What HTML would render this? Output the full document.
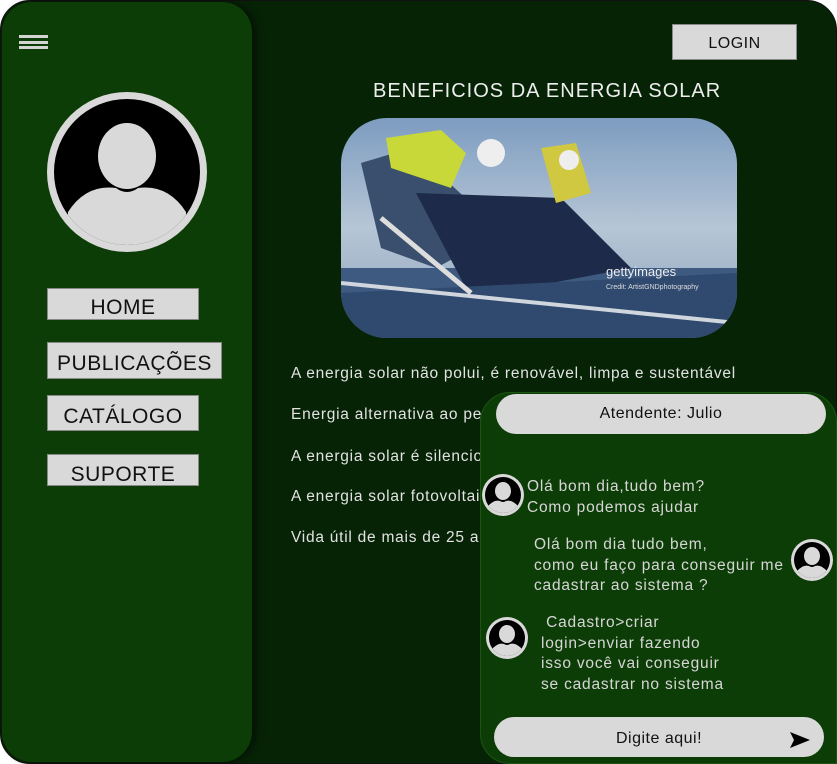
<!DOCTYPE html>
<html><head><meta charset="utf-8"><style>
*{margin:0;padding:0;box-sizing:border-box}
body{width:837px;height:764px;background:#fff;position:relative;overflow:hidden;font-family:"Liberation Sans","DejaVu Sans",sans-serif}
.main{position:absolute;left:0;top:0;width:837px;height:764px;background:#062306;border-radius:30px;border:1px solid #111}
.side{position:absolute;left:2px;top:2px;width:250px;height:760px;background:#0d3d06;border-radius:30px 30px 30px 30px;box-shadow:4px 0 8px rgba(0,0,0,.5)}
.btn{position:absolute;background:#d9d9d9;border:1px solid #888;color:#111;font-size:21px;text-align:center;letter-spacing:.5px}
.t{position:absolute;color:#e2e2e2;font-size:15.5px;white-space:nowrap;letter-spacing:.75px}
.chat{position:absolute;left:480px;top:392px;width:357px;height:372px;background:#0d3d06;border-radius:30px 30px 0 30px;border:1px solid #1b5512}
.pill{position:absolute;background:#d9d9d9;color:#111;text-align:center;font-size:16px;letter-spacing:.5px}
.msg{position:absolute;color:#d6d6d6;font-size:15.5px;line-height:20.5px;white-space:nowrap;letter-spacing:.8px}
</style></head><body>
<div class="main"></div>
<div class="side"></div>
<div style="position:absolute;left:19px;top:35px;width:29px;height:3px;background:#d4d4d4"></div>
<div style="position:absolute;left:19px;top:41px;width:29px;height:3px;background:#d4d4d4"></div>
<div style="position:absolute;left:19px;top:46px;width:29px;height:3px;background:#d4d4d4"></div>
<svg style="position:absolute;left:46px;top:92px" width="162" height="160" viewBox="0 0 162 160">
<defs><clipPath id="c"><circle cx="81" cy="80" r="73"/></clipPath></defs>
<circle cx="81" cy="80" r="80" fill="#d9d9d9"/>
<circle cx="81" cy="80" r="73" fill="#000"/>
<g clip-path="url(#c)"><ellipse cx="81" cy="64" rx="29" ry="33" fill="#d9d9d9"/>
<path d="M22 170 L22 120 Q40 92 70 96 Q81 104 92 96 Q122 92 140 120 L140 170Z" fill="#d9d9d9"/></g>
</svg>
<div class="btn" style="left:47px;top:288px;width:152px;height:32px;line-height:38px">HOME</div>
<div class="btn" style="left:47px;top:342px;width:175px;height:37px;line-height:42px">PUBLICAÇÕES</div>
<div class="btn" style="left:47px;top:395px;width:152px;height:36px;line-height:41px">CATÁLOGO</div>
<div class="btn" style="left:47px;top:454px;width:152px;height:32px;line-height:40px">SUPORTE</div>
<div class="btn" style="left:672px;top:24px;width:125px;height:36px;line-height:37px;font-size:16px">LOGIN</div>
<div class="t" style="left:373px;top:80px;font-size:20px;color:#eee;letter-spacing:1px">BENEFICIOS DA ENERGIA SOLAR</div>
<svg style="position:absolute;left:341px;top:118px" width="396" height="220" viewBox="0 0 396 220">
<defs><clipPath id="r"><rect width="396" height="220" rx="46"/></clipPath>
<linearGradient id="sky" x1="0" y1="0" x2="0" y2="1"><stop offset="0" stop-color="#7d9cc0"/><stop offset=".5" stop-color="#b6c6d6"/><stop offset="1" stop-color="#8aa0b8"/></linearGradient></defs>
<g clip-path="url(#r)">
<rect width="396" height="220" fill="url(#sky)"/>
<rect y="150" width="396" height="70" fill="#3e5a80"/>
<polygon points="20,45 70,30 130,85 150,120 95,150 40,130" fill="#3a4e6e"/>
<polygon points="75,75 220,80 290,150 130,180" fill="#1d2a4a"/>
<polygon points="0,175 396,155 396,220 0,220" fill="#30496e"/>
<line x1="40" y1="100" x2="130" y2="175" stroke="#ddd" stroke-width="5"/>
<line x1="0" y1="165" x2="396" y2="205" stroke="#cfd6de" stroke-width="4"/>
<polygon points="45,20 100,12 125,35 110,70 50,50" fill="#c8d838"/>
<circle cx="150" cy="35" r="14" fill="#eee"/>
<polygon points="200,30 235,25 250,75 215,85" fill="#d0c840"/>
<circle cx="228" cy="42" r="10" fill="#eee"/>
<text x="265" y="158" fill="#eee" font-size="13" font-family="Liberation Sans">gettyimages</text>
<text x="265" y="171" fill="#ddd" font-size="7" font-family="Liberation Sans">Credit: ArtistGNDphotography</text>
</g></svg>
<div class="t" style="left:291px;top:365px">A energia solar não polui, é renovável, limpa e sustentável</div>
<div class="t" style="left:291px;top:406px">Energia alternativa ao petróleo</div>
<div class="t" style="left:291px;top:447px">A energia solar é silencio<span style="color:#8a4fe0">❖ ...</span></div>
<div class="t" style="left:291px;top:488px">A energia solar fotovoltaica</div>
<div class="t" style="left:291px;top:529px">Vida útil de mais de 25 anos</div>
<div class="chat"></div>
<div class="pill" style="left:496px;top:394px;width:330px;height:40px;line-height:40px;border-radius:20px">Atendente: Julio</div>
<svg width="0" height="0" style="position:absolute"><defs><symbol id="av" viewBox="0 0 42 42"><clipPath id="ac"><circle cx="21" cy="21" r="18"/></clipPath><circle cx="21" cy="21" r="21" fill="#d9d9d9"/><circle cx="21" cy="21" r="18" fill="#000"/><g clip-path="url(#ac)"><ellipse cx="21" cy="17" rx="8" ry="9" fill="#d9d9d9"/><path d="M5 45 L5 33 Q12 25 18 27 Q21 29 24 27 Q30 25 37 33 L37 45Z" fill="#d9d9d9"/></g></symbol></defs></svg>
<svg style="position:absolute;left:482px;top:474px" width="42" height="42"><use href="#av"/></svg>
<svg style="position:absolute;left:791px;top:539px" width="42" height="42"><use href="#av"/></svg>
<svg style="position:absolute;left:486px;top:617px" width="42" height="42"><use href="#av"/></svg>
<div class="msg" style="left:527px;top:477px">Olá bom dia,tudo bem?<br>Como podemos ajudar</div>
<div class="msg" style="left:534px;top:535px">Olá bom dia tudo bem,<br>como eu faço para conseguir me<br>cadastrar ao sistema ?</div>
<div class="msg" style="left:541px;top:613px">&nbsp;Cadastro&gt;criar<br>login&gt;enviar fazendo<br>isso você vai conseguir<br>se cadastrar no sistema</div>
<div class="pill" style="left:494px;top:717px;width:330px;height:40px;line-height:44px;border-radius:20px">Digite aqui!</div>
<svg style="position:absolute;left:789px;top:731px" width="22" height="18" viewBox="0 0 22 18"><path d="M1 1 L21 9 L1 17 L5 9Z" fill="#000"/></svg>
</body></html>
